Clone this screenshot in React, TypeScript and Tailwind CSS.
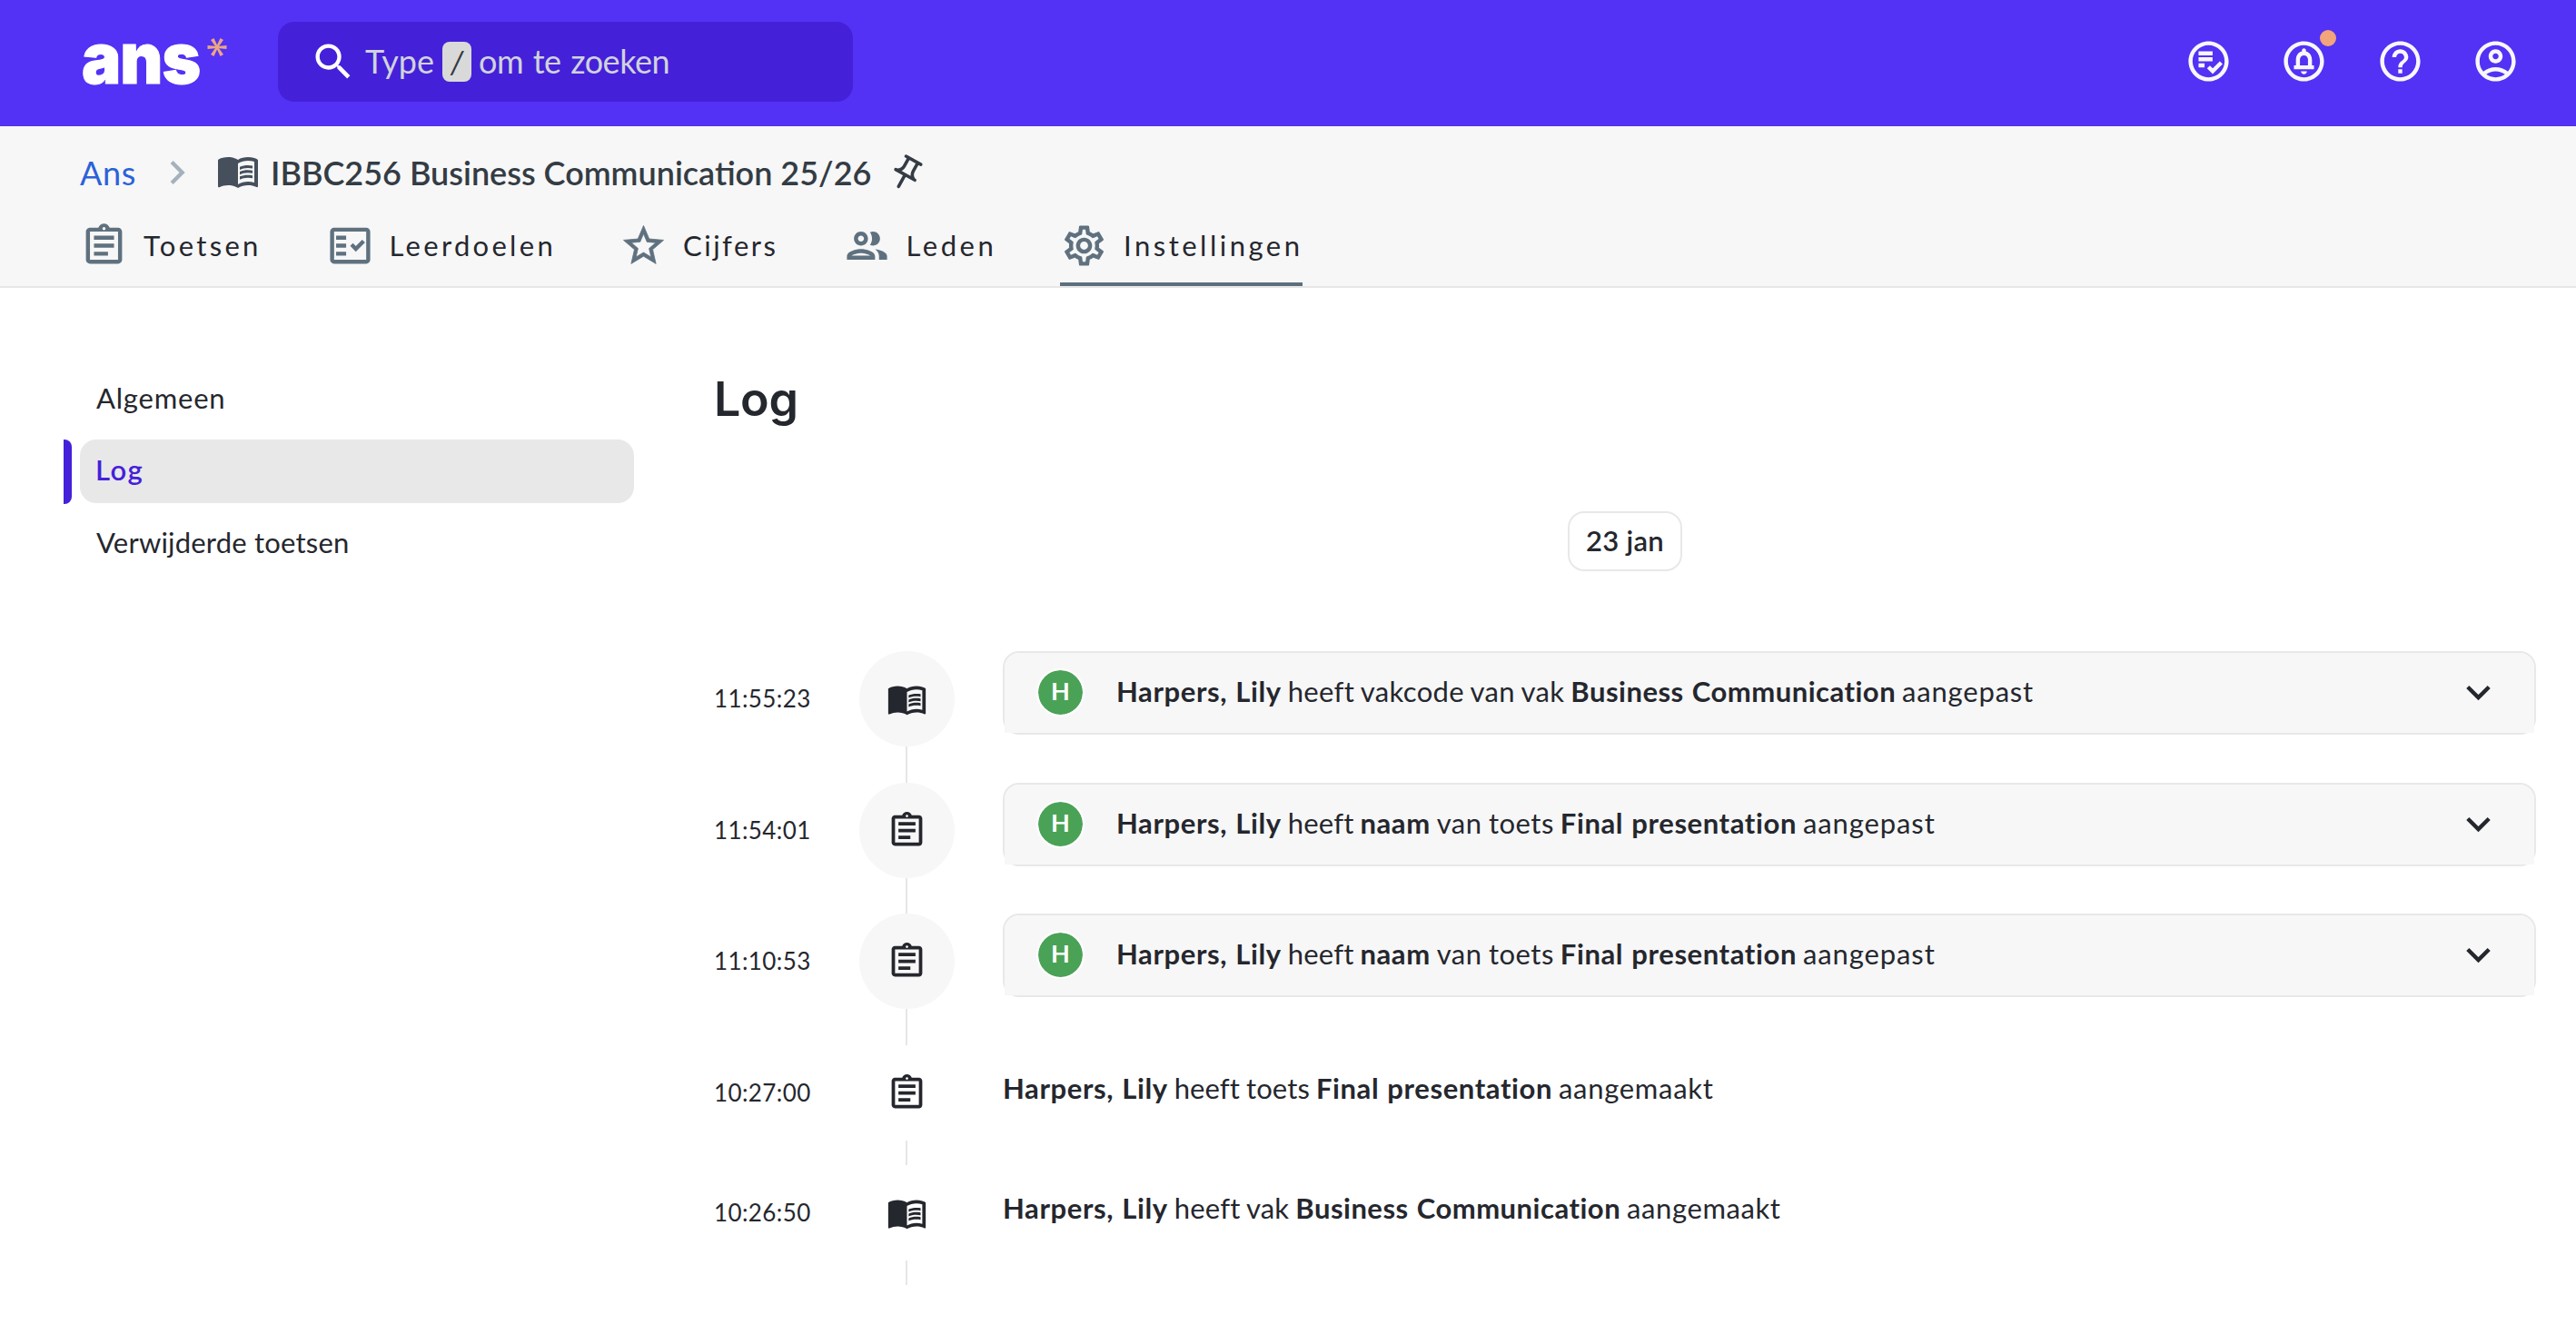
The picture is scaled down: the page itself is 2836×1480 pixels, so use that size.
import React from "react";
import {
  MdChevronRight,
  MdExpandMore,
  MdHelpOutline,
  MdMenuBook,
  MdOutlineAccountCircle,
  MdOutlineAssignment,
  MdOutlineCircleNotifications,
  MdOutlineFactCheck,
  MdOutlineGroup,
  MdOutlinePlaylistAddCheckCircle,
  MdOutlineSettings,
  MdSearch,
} from "react-icons/md";

type Segment = { text: string; bold?: boolean; className: string };
type Entry = {
  time: string;
  kind: "course" | "test";
  expandable: boolean;
  height: string;
  segments: Segment[];
};

const person: Segment = { text: "Harpers, Lily", bold: true, className: "tracking-[0.6px]" };
const finalPresentation: Segment = { text: "Final presentation", bold: true, className: "tracking-[0.6px]" };
const business: Segment = { text: "Business Communication", bold: true, className: "tracking-[0.5px]" };
const renamed: Segment[] = [
  person,
  { text: "heeft", className: "tracking-[0.2px]" },
  { text: "naam", bold: true, className: "tracking-[0.6px]" },
  { text: "van toets", className: "tracking-[0.5px]" },
  finalPresentation,
  { text: "aangepast", className: "tracking-[0.9px]" },
];

const entries: Entry[] = [
  {
    time: "11:55:23",
    kind: "course",
    expandable: true,
    height: "h-[145px]",
    segments: [
      person,
      { text: "heeft vakcode van vak", className: "tracking-[0.35px]" },
      business,
      { text: "aangepast", className: "tracking-[0.8px]" },
    ],
  },
  { time: "11:54:01", kind: "test", expandable: true, height: "h-[144px]", segments: renamed },
  { time: "11:10:53", kind: "test", expandable: true, height: "h-[145px]", segments: renamed },
  {
    time: "10:27:00",
    kind: "test",
    expandable: false,
    height: "h-[132px]",
    segments: [
      person,
      { text: "heeft toets", className: "tracking-[0.1px]" },
      finalPresentation,
      { text: "aangemaakt", className: "tracking-[0.7px]" },
    ],
  },
  {
    time: "10:26:50",
    kind: "course",
    expandable: false,
    height: "h-[132px]",
    segments: [
      person,
      { text: "heeft vak", className: "tracking-[0.2px]" },
      business,
      { text: "aangemaakt", className: "tracking-[0.6px]" },
    ],
  },
];

function StarOutline({ className }: { className?: string }) {
  return (
    <svg viewBox="0 0 24 24" className={className} fill="currentColor" stroke="currentColor" strokeWidth="0.35">
      <path d="M22 9.24l-7.19-.62L12 2 9.19 8.63 2 9.24l5.46 4.73L5.82 21 12 17.27 18.18 21l-1.63-7.03L22 9.24zM12 15.4l-3.76 2.27 1-4.28-3.32-2.88 4.38-.38L12 6.1l1.71 4.04 4.38.38-3.32 2.88 1 4.28L12 15.4z" />
    </svg>
  );
}

const tabs = [
  { label: "Toetsen", Icon: MdOutlineAssignment, width: "w-[199px]", tracking: "tracking-[3.3px]" },
  { label: "Leerdoelen", Icon: MdOutlineFactCheck, width: "w-[252px]", tracking: "tracking-[3.3px]" },
  { label: "Cijfers", Icon: StarOutline, width: "w-[174px]", tracking: "tracking-[2.5px]" },
  { label: "Leden", Icon: MdOutlineGroup, width: "w-[168px]", tracking: "tracking-[3.5px]" },
  { label: "Instellingen", Icon: MdOutlineSettings, width: "w-[267px]", tracking: "tracking-[3.5px]" },
];
const activeTab = "Instellingen";

function Asterisk() {
  return (
    <svg viewBox="-11 -11 22 22" className="mt-[41px] ml-[7px] size-[22px] fill-[#eba684]">
      {[0, 60, 120, 180, 240, 300].map((angle) => (
        <path key={angle} d="M0 -1.1L10.5 -2V2L0 1.1Z" transform={`rotate(${angle})`} />
      ))}
    </svg>
  );
}

function Pin() {
  return (
    <svg
      viewBox="0 0 24 24"
      className="size-[43px] rotate-[29deg] fill-none stroke-[#343c46] stroke-2"
      strokeLinecap="round"
      strokeLinejoin="round"
    >
      <path d="M7 3h10.4M5.4 13.2h13.4M12 13.5v8M9 3.2v5.6c0 1.7-.9 3.3-2.5 4.2M15.3 3.2v5.6c0 1.7.9 3.3 2.5 4.2" />
    </svg>
  );
}

function Header() {
  return (
    <header className="flex h-[139px] bg-[#5331f5]">
      <div className="flex w-[306px] pl-[90px]">
        <div className="w-[131px] overflow-visible pt-[19px]">
          <span className="block origin-left scale-x-[0.93] font-['Inter',sans-serif] text-[78px] leading-[90px] font-black tracking-[-1px] text-white [-webkit-text-stroke:1px_white]">
            ans
          </span>
        </div>
        <Asterisk />
      </div>
      <div className="mt-6 flex h-[88px] w-[633px] items-center rounded-[18px] bg-[#4520d9] pl-[35px] text-[36px] text-[#d0d3da]">
        <MdSearch className="size-[52px] text-white" />
        <span className="ml-[9px] w-[79px] pb-[2px]">Type</span>
        <span className="ml-[6px] flex h-11 w-8 items-center justify-center rounded-[8px] bg-[#d9d9d9] pb-[1px] text-[34px] text-[#343a40] italic">
          /
        </span>
        <span className="ml-[8px] pb-[2px] tracking-[-0.5px] [word-spacing:2px]">om te zoeken</span>
      </div>
      <div className="ml-auto flex h-[135px] items-center gap-[52.5px] pr-[62px] text-[53px] text-[#f7f7fb]">
        <MdOutlinePlaylistAddCheckCircle />
        <div className="relative">
          <MdOutlineCircleNotifications />
          <span className="absolute -top-[8px] right-[-8.5px] size-[18px] rounded-full bg-[#f2a47b]" />
        </div>
        <MdHelpOutline />
        <MdOutlineAccountCircle />
      </div>
    </header>
  );
}

function SubHeader() {
  return (
    <div className="h-[178px] border-b-2 border-[#e6e6e6] bg-[#f7f7f7] pl-[88px]">
      <div className="flex h-[102px] items-center">
        <a className="w-[81px] pb-[1px] text-[36px] tracking-[0.7px] text-[#2b62d9]">Ans</a>
        <MdChevronRight className="size-[52px] text-[#a5b1bc]" />
        <MdMenuBook className="mb-[5px] ml-[17px] size-[48px] text-[#46505c]" />
        <h2 className="ml-[12px] w-[678px] pb-[1px] text-[36px] font-semibold whitespace-nowrap text-[#343c44]">
          IBBC256 Business Communication 25/26
        </h2>
        <Pin />
      </div>
      <nav className="flex gap-[71.5px]">
        {tabs.map(({ label, Icon, width, tracking }) => (
          <div
            key={label}
            className={`flex h-[74px] gap-[17px] border-b-4 pt-[3px] ${width} ${label === activeTab ? "border-[#5d6f7d]" : "border-transparent"}`}
          >
            <Icon className="size-[53px] shrink-0 text-[#5f717f]" />
            <span className={`text-[31px] leading-[52px] text-[#25272e] ${tracking}`}>{label}</span>
          </div>
        ))}
      </nav>
    </div>
  );
}

function Sidebar() {
  return (
    <aside className="flex w-[716px] flex-col gap-[9px] pt-[88px] pl-[70px] text-[31px]">
      <div className="ml-[18px] flex h-[70px] items-center pb-[3px] pl-[18px] tracking-[0.8px]">Algemeen</div>
      <div className="flex gap-[9px]">
        <span className="h-[71px] w-[9px] rounded-r-[8px] bg-[#4520d9]" />
        <div className="flex h-[70px] w-[610px] items-center rounded-[18px] bg-[#e8e8e8] pb-[3px] pl-[17px] font-semibold tracking-[1.4px] text-[#4520d9]">
          Log
        </div>
      </div>
      <div className="ml-[18px] flex h-[70px] items-center pb-[4px] pl-[18px] tracking-[0.2px]">Verwijderde toetsen</div>
    </aside>
  );
}

function Message({ segments }: { segments: Segment[] }) {
  return (
    <p className="text-[31px] whitespace-nowrap [word-spacing:-1px]">
      {segments.map((s, i) => (
        <React.Fragment key={i}>
          {i > 0 && " "}
          <span className={`${s.bold ? "font-bold [word-spacing:1px]" : ""} ${s.className}`}>{s.text}</span>
        </React.Fragment>
      ))}
    </p>
  );
}

function LogRow({ entry }: { entry: Entry }) {
  const Icon = entry.kind === "course" ? MdMenuBook : MdOutlineAssignment;
  return (
    <div className={`flex ${entry.height}`}>
      <time className="flex h-[105px] w-[160px] items-center text-[26px] tracking-[0.4px]">{entry.time}</time>
      <div className="flex w-[105px] flex-col items-center">
        <div
          className={`flex size-[105px] items-center justify-center rounded-full pb-px ${entry.expandable ? "bg-[#f7f7f7]" : "bg-white"}`}
        >
          <Icon className="size-[45px]" />
        </div>
        <div className="mr-[1px] w-[2px] flex-1 bg-[#e6e6e6]" />
      </div>
      {entry.expandable ? (
        <div className="ml-[53px] h-[92px] w-[1688px] rounded-[18px] border-2 border-[#e8e8e8]">
          <div className="flex h-[88px] items-center rounded-t-[16px] bg-[#f7f7f7] pb-[2px] pl-[35px]">
            <div className="flex size-[53px] items-center justify-center rounded-full border-2 border-white bg-[#4aa257] bg-clip-padding pb-[2px] text-[27px] font-bold text-white">
              H
            </div>
            <div className="pb-px pl-[35px]">
              <Message segments={entry.segments} />
            </div>
            <MdExpandMore className="mr-[35px] ml-auto size-[53px]" />
          </div>
        </div>
      ) : (
        <div className="ml-[53px] flex h-[94px] items-center">
          <Message segments={entry.segments} />
        </div>
      )}
    </div>
  );
}

export default function App() {
  return (
    <div className="h-[1480px] w-[2836px] overflow-hidden bg-white font-['Lato',sans-serif] text-[#25272e]">
      <Header />
      <SubHeader />
      <div className="flex">
        <Sidebar />
        <main className="ml-[70px] pt-[88px]">
          <h1 className="font-['Inter',sans-serif] text-[52px] leading-[70px] font-semibold tracking-[-0.3px]">Log</h1>
          <div className="mt-[88px] flex w-[2006px] justify-center">
            <div className="flex h-[66px] w-[126px] items-center justify-center rounded-[18px] border-2 border-[#e8e8e8] pb-[2px] text-[31px] font-semibold tracking-[0.3px]">
              23 jan
            </div>
          </div>
          <div className="mt-[88px]">
            {entries.map((entry) => (
              <LogRow key={entry.time} entry={entry} />
            ))}
          </div>
        </main>
      </div>
    </div>
  );
}
